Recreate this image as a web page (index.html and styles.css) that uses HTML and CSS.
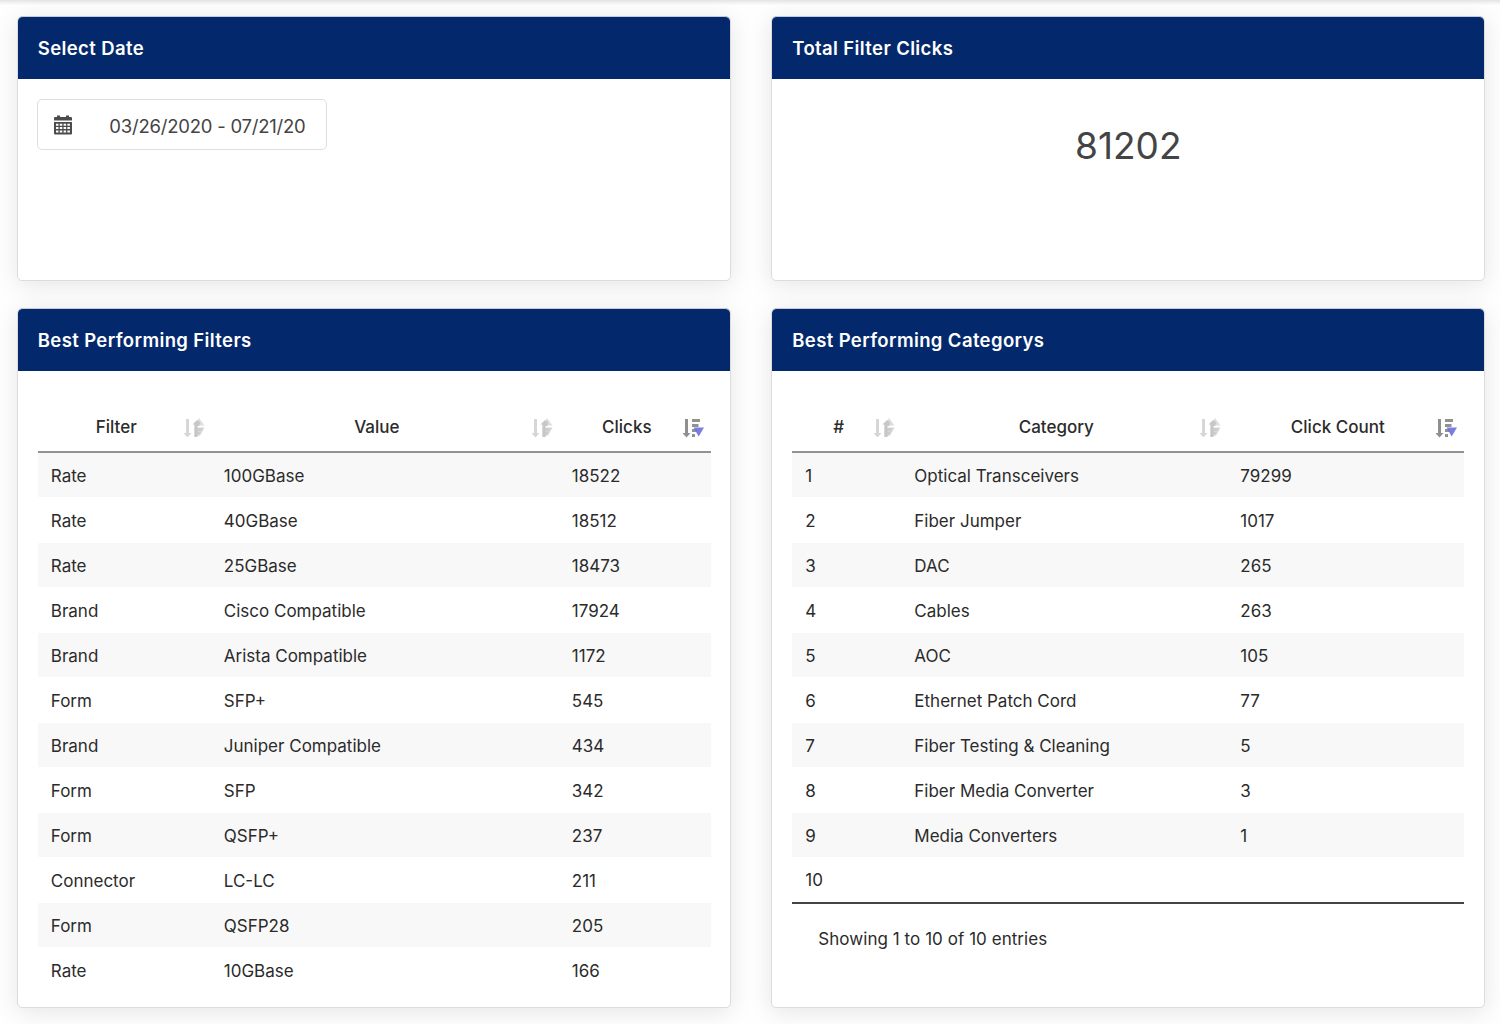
FILE: index.html
```html
<!DOCTYPE html>
<html lang="en">
<head>
  <meta charset="UTF-8">
  <meta name="viewport" content="width=device-width, initial-scale=1.0">
  <title>Filter Clicks</title>
  <link rel="stylesheet" href="styles.css">
</head>
<body>
  <!-- shared icons -->
  <svg class="icon-defs" xmlns="http://www.w3.org/2000/svg">
    <symbol id="icon-sort" viewBox="0 0 22 22">
      <path fill="#d6d6d6" d="M3 2h3v14h2.500L4.500 20.500.5 16H3z"/>
      <path fill="#dedede" d="M16 1l5.500 7.500H11z"/>
      <path fill="#d6d6d6" d="M11.500 10.500h10L17 18.500l-5.500 1z"/>
      <path fill="#c6c6c6" d="M9.500 7.500L14 3l2.500 2v4h-2v11h-3V7.500z"/>
      <path fill="#c9c9c9" d="M14 4.500h3v3h-3zM14 11.500h4.500v2H14zM14 15h2.500v2H14z"/>
    </symbol>
    <symbol id="icon-sort-desc" viewBox="0 0 22 22">
      <path fill="#8f8f8f" d="M3 2h3v14h2.500L4.500 20.500.5 16H3z"/>
      <path fill="#929292" d="M10 2h8v3h-8zM10 7h6.500v3H10zM10 12h5v3h-5zM10 17h3v3h-3z"/>
      <path fill="#6f72df" fill-opacity=".92" d="M11.500 10.500H22L16.700 19.500z"/>
    </symbol>
  </svg>

  <div class="topbar-shadow"></div>

  <main class="dashboard">
    <section class="card">
      <h2 class="card-header">Select Date</h2>
      <div class="card-body">
        <div class="date-range">
          <svg class="calendar" viewBox="0 0 18 20">
            <path fill="#4c4c4c" d="M1 2h2V.6h3V2h6V.6h3V2h2a1 1 0 0 1 1 1v2.600H0V3a1 1 0 0 1 1-1zM0 7h18v11.500a1 1 0 0 1-1 1H1a1 1 0 0 1-1-1z"/>
            <path fill="#fff" d="M2 8.700h2.500v2H2zM5.800 8.700h2.500v2H5.800zM9.600 8.700h2.500v2H9.600zM13.400 8.700h2.500v2h-2.500zM2 12.100h2.500v2H2zM5.800 12.100h2.500v2H5.800zM9.600 12.100h2.500v2H9.600zM13.400 12.100h2.500v2h-2.500zM2 15.500h2.500v2H2zM5.800 15.500h2.500v2H5.800zM9.600 15.500h2.500v2H9.600zM13.400 15.500h2.500v2h-2.500z"/>
          </svg>
          <span class="date-text">03/26/2020 - 07/21/20</span>
        </div>
      </div>
    </section>

    <section class="card">
      <h2 class="card-header">Total Filter Clicks</h2>
      <div class="card-body">
        <p class="total">81202</p>
      </div>
    </section>

    <section class="card">
      <h2 class="card-header">Best Performing Filters</h2>
      <div class="card-body table-body">
        <table class="data-table filters">
          <colgroup><col class="col-filter"><col class="col-value"><col></colgroup>
          <thead>
            <tr>
              <th>Filter<svg class="sort"><use href="#icon-sort"/></svg></th>
              <th>Value<svg class="sort"><use href="#icon-sort"/></svg></th>
              <th>Clicks<svg class="sort active"><use href="#icon-sort-desc"/></svg></th>
            </tr>
          </thead>
          <tbody>
            <tr><td>Rate</td><td>100GBase</td><td>18522</td></tr>
            <tr><td>Rate</td><td>40GBase</td><td>18512</td></tr>
            <tr><td>Rate</td><td>25GBase</td><td>18473</td></tr>
            <tr><td>Brand</td><td>Cisco Compatible</td><td>17924</td></tr>
            <tr><td>Brand</td><td>Arista Compatible</td><td>1172</td></tr>
            <tr><td>Form</td><td>SFP+</td><td>545</td></tr>
            <tr><td>Brand</td><td>Juniper Compatible</td><td>434</td></tr>
            <tr><td>Form</td><td>SFP</td><td>342</td></tr>
            <tr><td>Form</td><td>QSFP+</td><td>237</td></tr>
            <tr><td>Connector</td><td>LC-LC</td><td>211</td></tr>
            <tr><td>Form</td><td>QSFP28</td><td>205</td></tr>
            <tr><td>Rate</td><td>10GBase</td><td>166</td></tr>
          </tbody>
        </table>
      </div>
    </section>

    <section class="card">
      <h2 class="card-header">Best Performing Categorys</h2>
      <div class="card-body table-body">
        <table class="data-table categories">
          <colgroup><col class="col-num"><col class="col-category"><col></colgroup>
          <thead>
            <tr>
              <th>#<svg class="sort"><use href="#icon-sort"/></svg></th>
              <th>Category<svg class="sort"><use href="#icon-sort"/></svg></th>
              <th>Click Count<svg class="sort active"><use href="#icon-sort-desc"/></svg></th>
            </tr>
          </thead>
          <tbody>
            <tr><td>1</td><td>Optical Transceivers</td><td>79299</td></tr>
            <tr><td>2</td><td>Fiber Jumper</td><td>1017</td></tr>
            <tr><td>3</td><td>DAC</td><td>265</td></tr>
            <tr><td>4</td><td>Cables</td><td>263</td></tr>
            <tr><td>5</td><td>AOC</td><td>105</td></tr>
            <tr><td>6</td><td>Ethernet Patch Cord</td><td>77</td></tr>
            <tr><td>7</td><td>Fiber Testing &amp; Cleaning</td><td>5</td></tr>
            <tr><td>8</td><td>Fiber Media Converter</td><td>3</td></tr>
            <tr><td>9</td><td>Media Converters</td><td>1</td></tr>
            <tr><td>10</td><td></td><td></td></tr>
          </tbody>
        </table>
        <p class="table-info">Showing 1 to 10 of 10 entries</p>
      </div>
    </section>
  </main>
</body>
</html>
```
FILE: styles.css
```css
:root {
  --color-navy: #03296c;
  --color-text: #2b2b2b;
  --color-border: #dcdcdc;
  --color-stripe: #f8f8f8;
}

* {
  box-sizing: border-box;
  margin: 0;
  padding: 0;
}

body {
  font-family: Inter, "Liberation Sans", sans-serif;
  font-size: 17px;
  color: var(--color-text);
  background-color: #fefefe;
  height: 1024px;
  overflow: hidden;
}

.icon-defs {
  display: none;
}

.topbar-shadow {
  height: 5px;
  background: linear-gradient(#e4e4e4, #fdfdfd);
}

.dashboard {
  display: grid;
  grid-template-columns: 714px 714px;
  grid-template-rows: 265px 700px;
  column-gap: 40.500px;
  row-gap: 27px;
  padding: 11px 0 0 16.800px;
}

.card {
  background-color: #fff;
  border: 1px solid var(--color-border);
  border-radius: 5px;
  box-shadow: 0 4px 24px rgba(0, 0, 0, 0.1);
}

.card-header {
  height: 63px;
  margin: -1px 0 0;
  padding: 0 20px;
  border-top: 1px solid #c3cbdb;
  border-radius: 5px 5px 0 0;
  background-color: var(--color-navy);
  color: #fff;
  font-size: 18.5px;
  font-weight: 600;
  line-height: 63px;
  letter-spacing: 0.38px;
}

.card-body {
  padding: 20px;
}

.date-range {
  display: flex;
  align-items: center;
  width: 290px;
  height: 51px;
  margin-left: -0.5px;
  padding: 0 16px;
  border: 1px solid #dedede;
  border-radius: 5px;
}

.calendar {
  flex: none;
  width: 18px;
  height: 20px;
  margin-right: 37px;
}

.date-text {
  padding-top: 3px;
  font-size: 18.5px;
  letter-spacing: -0.22px;
  color: #444;
  white-space: nowrap;
}

.total {
  margin-top: 23px;
  font-size: 37px;
  line-height: 48px;
  text-align: center;
  color: #444;
}

.table-body {
  padding-top: 31px;
}

.data-table {
  width: 673px;
  table-layout: fixed;
  border-collapse: separate;
  border-spacing: 0;
}

.categories {
  width: 672px;
  border-bottom: 2px solid #444;
}

.col-filter { width: 173px; }
.col-value { width: 348px; }
.col-num { width: 109px; }
.col-category { width: 326px; }

.data-table th {
  position: relative;
  height: 51px;
  padding: 1px 29px 0 13px;
  border-bottom: 2px solid #929292;
  font-weight: 500;
  text-align: center;
}

.data-table td {
  height: 45px;
  padding: 1px 13px 0;
  border-bottom: 1px solid #fff;
  text-align: left;
  white-space: nowrap;
}

.data-table tbody tr:nth-child(odd) {
  background-color: var(--color-stripe);
}

.categories tbody tr:last-child td {
  height: 44px;
}

/* sort arrows sit over the right padding of the header cell */
.sort {
  position: absolute;
  top: 15px;
  right: 6px;
  width: 22px;
  height: 22px;
}

.sort.active {
  right: 7px;
}

.table-info {
  padding: 22px 26px;
  line-height: 26px;
  letter-spacing: 0.05px;
}
```
